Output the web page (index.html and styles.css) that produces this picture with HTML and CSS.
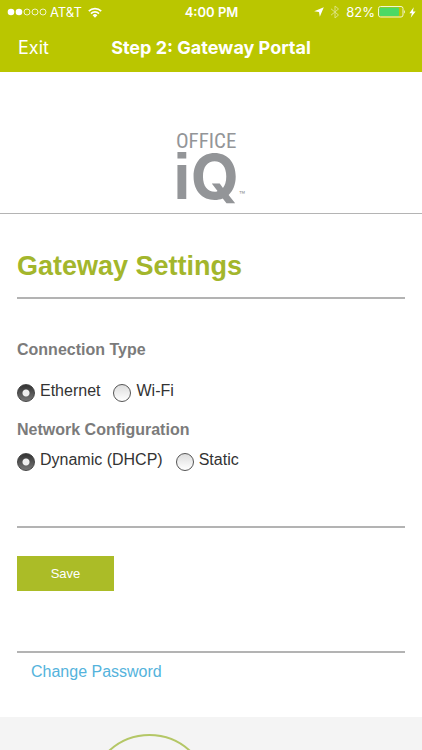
FILE: index.html
```html
<!DOCTYPE html>
<html lang="en">
<head>
<meta charset="utf-8">
<meta name="viewport" content="width=device-width, initial-scale=1">
<title>Gateway Portal</title>
<link rel="stylesheet" href="styles.css">
</head>
<body>
<header class="top">
  <div class="status">
    <div class="status-left">
      <svg width="40" height="10" viewBox="0 0 40 10" aria-hidden="true">
        <g fill="#fff"><circle cx="4" cy="5" r="3.3"/><circle cx="12" cy="5" r="3.3"/></g>
        <g fill="none" stroke="#fff" stroke-width=".8"><circle cx="20" cy="5" r="3"/><circle cx="28" cy="5" r="3"/><circle cx="36" cy="5" r="3"/></g>
      </svg>
      <span>AT&amp;T</span>
      <svg class="wifi" width="14" height="11" viewBox="0 0 14 11" aria-hidden="true">
        <path d="M.8 4.2a8.8 8.8 0 0 1 12.4 0M3 6.6a5.7 5.7 0 0 1 8 0" fill="none" stroke="#fff" stroke-width="1.7"/>
        <path d="M4.6 8.2a3.4 3.4 0 0 1 4.8 0L7 10.7z" fill="#fff"/>
      </svg>
    </div>
    <time class="clock">4:00 PM</time>
    <div class="status-right">
      <svg width="10" height="10" viewBox="0 0 10 10" aria-hidden="true"><path d="M9.8.2 5.8 9.8 5 5 .2 4.300z" fill="#fff"/></svg>
      <svg class="bluetooth" width="10" height="14" viewBox="0 0 10 14" aria-hidden="true"><path d="m1 3.800 7.500 6.200L5 13V1l3.500 3L1 10.200" fill="none" stroke="#fff" stroke-width="1"/></svg>
      <span>82%</span>
      <svg width="28" height="12" viewBox="0 0 28 12" aria-hidden="true">
        <rect x=".5" y=".5" width="24.500" height="10.500" rx="2" fill="none" stroke="#f3f6cf"/>
        <rect x="1.500" y="1.500" width="19.500" height="8.500" rx="1" fill="#4cd964"/>
        <path d="M26 3.800q1.600 2 0 4z" fill="#fff"/>
      </svg>
      <svg width="7" height="11" viewBox="0 0 7 11" aria-hidden="true"><path d="M4.700.3.400 6.200h2.500L1.700 10.700 6.600 4.500H4z" fill="#fff"/></svg>
    </div>
  </div>
  <nav class="bar">
    <a class="exit" href="#">Exit</a>
    <h1 class="title">Step 2: Gateway Portal</h1>
  </nav>
</header>
<div class="brand">
  <div class="logo">
    <span class="logo-top">OFFICE</span>
    <span class="logo-main"><span class="logo-i">i</span><span>Q</span><small class="tm">™</small></span>
  </div>
</div>
<main class="content">
  <h2 class="heading">Gateway Settings</h2>
  <form class="form">
    <fieldset class="group connection">
      <legend>Connection Type</legend>
      <div class="options">
        <label><input type="radio" name="connection" checked>Ethernet</label>
        <label><input type="radio" name="connection">Wi-Fi</label>
      </div>
    </fieldset>
    <fieldset class="group network">
      <legend>Network Configuration</legend>
      <div class="options">
        <label><input type="radio" name="network" checked>Dynamic (DHCP)</label>
        <label><input type="radio" name="network">Static</label>
      </div>
    </fieldset>
    <div class="actions"><button class="save" type="submit">Save</button></div>
  </form>
  <div class="account"><a href="#">Change Password</a></div>
</main>
<footer class="footer"><div class="ring"></div></footer>
</body>
</html>
```
FILE: styles.css
```css
* { box-sizing: border-box; }

body {
  margin: 0;
  min-height: 100vh;
  display: flex;
  flex-direction: column;
  background: #fff;
  color: #333;
  font: 16px/20px "Liberation Sans", Arial, sans-serif;
}

.top {
  background: #bac600;
  color: #fff;
  font-family: Inter, "Liberation Sans", sans-serif;
}

.status {
  display: grid;
  grid-template-columns: 1fr auto 1fr;
  align-items: center;
  height: 24px;
  padding: 0 6px 0 7px;
  font-size: 13px;
}

.status-left, .status-right { display: flex; align-items: center; gap: 3px; }
.status-left .wifi { margin-left: 3px; }
.status-right { justify-content: flex-end; }
.bluetooth { opacity: .5; margin: 0 3px; }
.clock { font-weight: 600; }

.bar {
  display: grid;
  grid-template-columns: 1fr auto 1fr;
  align-items: center;
  height: 48px;
  padding: 0 18px;
}

.exit { color: #fff; font-size: 18px; text-decoration: none; }
.title { margin: 0; font-size: 18px; font-weight: 700; }

.brand {
  display: flex;
  justify-content: center;
  padding: 59px 4px 10px 0;
  border-bottom: 1px solid #b4b4b4;
}

.logo {
  display: flex;
  flex-direction: column;
  color: #939598;
}

.logo-top {
  padding-left: 3px;
  font: 21px/20px "Liberation Sans Narrow", "Roboto Condensed", "Liberation Sans", sans-serif;
}

.logo-main {
  display: flex;
  align-items: baseline;
  height: 52px;
  font: 700 62px/52px Inter, "Liberation Sans", sans-serif;
}

.logo-i { font-family: "Liberation Sans", Arial, sans-serif; font-size: 64px; }
.tm { font-size: 10px; font-weight: 400; line-height: 8px; }

.content { padding: 36px 17px 35px; }

.heading {
  margin: 0;
  padding-bottom: 15px;
  border-bottom: 2px solid #b3b3b3;
  color: #a3b62c;
  font-size: 27px;
  line-height: 32px;
}

.group { padding: 0; border: 0; }
.group legend { padding: 0; color: #7b7b7b; font-weight: 700; }
.connection { margin: 41px 0 0; }
.connection .options { padding-top: 21px; }
.network { margin: 18px 0 0; }
.network .options { padding: 10px 0 55px; border-bottom: 2px solid #b3b3b3; }

.options { display: flex; gap: 13px; }
.options label { display: flex; gap: 5px; }

.options input {
  appearance: none;
  width: 18px;
  height: 18px;
  margin: 3px 0 0;
  border: 1px solid #555;
  border-radius: 50%;
  background: linear-gradient(#ddd, #fff);
}

.options input:checked {
  border-color: #444;
  background: radial-gradient(circle, #eee 0 3px, transparent 4px), linear-gradient(#333, #777);
}

.actions { padding: 28px 0 60px; border-bottom: 2px solid #b3b3b3; }

.save {
  display: block;
  width: 97px;
  height: 35px;
  border: 0;
  background: #abbc27;
  color: #fff;
  font: 13px/20px "Liberation Sans", Arial, sans-serif;
}

.account { padding: 9px 14px 0; }
.account a { color: #54b3dc; text-decoration: none; }

.footer {
  flex: 1 0 33px;
  height: 33px;
  padding: 17px 0 0 89px;
  overflow: hidden;
  background: #f4f4f4;
}

.ring {
  width: 121px;
  height: 121px;
  border: 2px solid #b4c766;
  border-radius: 50%;
}
```
